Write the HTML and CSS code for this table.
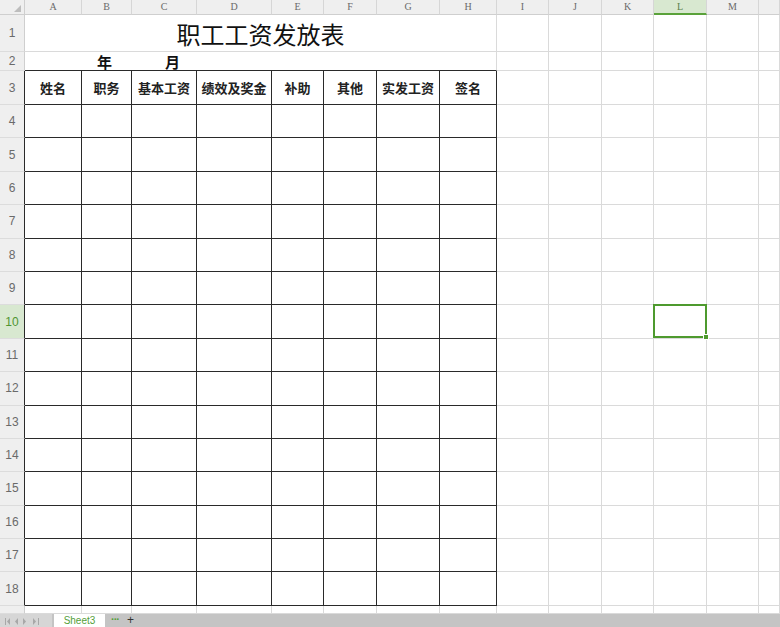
FILE: index.html
```html
<!DOCTYPE html>
<html lang="zh-CN">
<head>
<meta charset="utf-8">
<title>职工工资发放表</title>
<link rel="stylesheet" href="styles.css">
</head>
<body>
<div class="sheet">
  <!-- column header -->
  <div class="hd corner"></div>
  <div class="hd">A</div><div class="hd">B</div><div class="hd">C</div><div class="hd">D</div>
  <div class="hd">E</div><div class="hd">F</div><div class="hd">G</div><div class="hd">H</div>
  <div class="hd">I</div><div class="hd">J</div><div class="hd">K</div><div class="hd hd-sel">L</div>
  <div class="hd">M</div><div class="hd"></div>

  <!-- row 1 -->
  <div class="rh">1</div>
  <div class="c title">职工工资发放表</div>
  <div class="c"></div><div class="c"></div><div class="c"></div><div class="c"></div><div class="c"></div><div class="c"></div>

  <!-- row 2 -->
  <div class="rh">2</div>
  <div class="c date"><span>年</span><span>月</span></div>
  <div class="c"></div><div class="c"></div><div class="c"></div><div class="c"></div><div class="c"></div><div class="c"></div>

  <!-- row 3 -->
  <div class="rh tb">3</div>
  <div class="t th">姓名</div><div class="t th">职务</div><div class="t th">基本工资</div><div class="t th">绩效及奖金</div>
  <div class="t th">补助</div><div class="t th">其他</div><div class="t th">实发工资</div><div class="t th">签名</div>
  <div class="c"></div><div class="c"></div><div class="c"></div><div class="c"></div><div class="c"></div><div class="c"></div>

  <!-- row 4 -->
  <div class="rh tb">4</div>
  <div class="t"></div><div class="t"></div><div class="t"></div><div class="t"></div><div class="t"></div><div class="t"></div><div class="t"></div><div class="t"></div>
  <div class="c"></div><div class="c"></div><div class="c"></div><div class="c"></div><div class="c"></div><div class="c"></div>
  <!-- row 5 -->
  <div class="rh tb">5</div>
  <div class="t"></div><div class="t"></div><div class="t"></div><div class="t"></div><div class="t"></div><div class="t"></div><div class="t"></div><div class="t"></div>
  <div class="c"></div><div class="c"></div><div class="c"></div><div class="c"></div><div class="c"></div><div class="c"></div>
  <!-- row 6 -->
  <div class="rh tb">6</div>
  <div class="t"></div><div class="t"></div><div class="t"></div><div class="t"></div><div class="t"></div><div class="t"></div><div class="t"></div><div class="t"></div>
  <div class="c"></div><div class="c"></div><div class="c"></div><div class="c"></div><div class="c"></div><div class="c"></div>
  <!-- row 7 -->
  <div class="rh tb">7</div>
  <div class="t"></div><div class="t"></div><div class="t"></div><div class="t"></div><div class="t"></div><div class="t"></div><div class="t"></div><div class="t"></div>
  <div class="c"></div><div class="c"></div><div class="c"></div><div class="c"></div><div class="c"></div><div class="c"></div>
  <!-- row 8 -->
  <div class="rh tb">8</div>
  <div class="t"></div><div class="t"></div><div class="t"></div><div class="t"></div><div class="t"></div><div class="t"></div><div class="t"></div><div class="t"></div>
  <div class="c"></div><div class="c"></div><div class="c"></div><div class="c"></div><div class="c"></div><div class="c"></div>
  <!-- row 9 -->
  <div class="rh tb">9</div>
  <div class="t"></div><div class="t"></div><div class="t"></div><div class="t"></div><div class="t"></div><div class="t"></div><div class="t"></div><div class="t"></div>
  <div class="c"></div><div class="c"></div><div class="c"></div><div class="c"></div><div class="c"></div><div class="c"></div>
  <!-- row 10 -->
  <div class="rh tb rh-sel">10</div>
  <div class="t"></div><div class="t"></div><div class="t"></div><div class="t"></div><div class="t"></div><div class="t"></div><div class="t"></div><div class="t"></div>
  <div class="c"></div><div class="c"></div><div class="c"></div><div class="c sel"></div><div class="c"></div><div class="c"></div>
  <!-- row 11 -->
  <div class="rh tb">11</div>
  <div class="t"></div><div class="t"></div><div class="t"></div><div class="t"></div><div class="t"></div><div class="t"></div><div class="t"></div><div class="t"></div>
  <div class="c"></div><div class="c"></div><div class="c"></div><div class="c"></div><div class="c"></div><div class="c"></div>
  <!-- row 12 -->
  <div class="rh tb">12</div>
  <div class="t"></div><div class="t"></div><div class="t"></div><div class="t"></div><div class="t"></div><div class="t"></div><div class="t"></div><div class="t"></div>
  <div class="c"></div><div class="c"></div><div class="c"></div><div class="c"></div><div class="c"></div><div class="c"></div>
  <!-- row 13 -->
  <div class="rh tb">13</div>
  <div class="t"></div><div class="t"></div><div class="t"></div><div class="t"></div><div class="t"></div><div class="t"></div><div class="t"></div><div class="t"></div>
  <div class="c"></div><div class="c"></div><div class="c"></div><div class="c"></div><div class="c"></div><div class="c"></div>
  <!-- row 14 -->
  <div class="rh tb">14</div>
  <div class="t"></div><div class="t"></div><div class="t"></div><div class="t"></div><div class="t"></div><div class="t"></div><div class="t"></div><div class="t"></div>
  <div class="c"></div><div class="c"></div><div class="c"></div><div class="c"></div><div class="c"></div><div class="c"></div>
  <!-- row 15 -->
  <div class="rh tb">15</div>
  <div class="t"></div><div class="t"></div><div class="t"></div><div class="t"></div><div class="t"></div><div class="t"></div><div class="t"></div><div class="t"></div>
  <div class="c"></div><div class="c"></div><div class="c"></div><div class="c"></div><div class="c"></div><div class="c"></div>
  <!-- row 16 -->
  <div class="rh tb">16</div>
  <div class="t"></div><div class="t"></div><div class="t"></div><div class="t"></div><div class="t"></div><div class="t"></div><div class="t"></div><div class="t"></div>
  <div class="c"></div><div class="c"></div><div class="c"></div><div class="c"></div><div class="c"></div><div class="c"></div>
  <!-- row 17 -->
  <div class="rh tb">17</div>
  <div class="t"></div><div class="t"></div><div class="t"></div><div class="t"></div><div class="t"></div><div class="t"></div><div class="t"></div><div class="t"></div>
  <div class="c"></div><div class="c"></div><div class="c"></div><div class="c"></div><div class="c"></div><div class="c"></div>
  <!-- row 18 -->
  <div class="rh tb">18</div>
  <div class="t"></div><div class="t"></div><div class="t"></div><div class="t"></div><div class="t"></div><div class="t"></div><div class="t"></div><div class="t"></div>
  <div class="c"></div><div class="c"></div><div class="c"></div><div class="c"></div><div class="c"></div><div class="c"></div>
  <!-- row 19 (partial) -->
  <div class="rh"></div>
  <div class="c"></div><div class="c"></div><div class="c"></div><div class="c"></div><div class="c"></div><div class="c"></div><div class="c"></div>
  <div class="c"></div><div class="c"></div><div class="c"></div><div class="c"></div><div class="c"></div><div class="c"></div><div class="c"></div>
</div>

<div class="tabs">
  <div class="nav">
    <svg width="52" height="13" viewBox="0 0 52 13">
      <g fill="#a8a8a8">
        <rect x="5" y="4" width="1" height="7"/>
        <polygon points="10,4 10,11 7,7.5"/>
        <polygon points="18,4 18,11 15,7.5"/>
        <polygon points="23,4 23,11 26,7.5"/>
        <polygon points="33,4 33,11 36,7.5"/>
        <rect x="38" y="4" width="1" height="7"/>
      </g>
    </svg>
  </div>
  <div class="tab">Sheet3</div>
  <span class="more">···</span>
  <span class="add">+</span>
</div>
</body>
</html>
```
FILE: styles.css
```css
* {
  box-sizing: border-box;
  margin: 0;
  padding: 0;
}

body {
  width: 780px;
  height: 627px;
  overflow: hidden;
  background: #ffffff;
  font-family: "Noto Sans CJK SC", "Noto Sans", sans-serif;
}

.sheet {
  display: grid;
  grid-template-columns: 25px 57px 50px 65px 75px 52px 53px 63px 57px 52px 53px 52px 53px 52px 21px;
  grid-template-rows: 15px 37px 19px 34px repeat(15, 33.4px) 8px;
  height: 614px;
  overflow: hidden;
}

/* column headers */
.hd {
  background: #efefef;
  border-right: 1px solid #d6d6d6;
  border-bottom: 1px solid #cfcfcf;
  color: #6a6a6a;
  font-family: "Liberation Serif", serif;
  font-size: 10px;
  line-height: 13px;
  text-align: center;
}

.corner {
  position: relative;
  border-right-color: #cfcfcf;
}

.corner::after {
  content: "";
  position: absolute;
  right: 3px;
  bottom: 2px;
  width: 0;
  height: 0;
  border-left: 7px solid transparent;
  border-bottom: 7px solid #bdbdbd;
}

.hd-sel {
  background: #d8e8d0;
  border-bottom: 2px solid #5aa23a;
  color: #5b7f4c;
}

/* row headers */
.rh {
  background: #efefef;
  border-right: 1px solid #cfcfcf;
  border-bottom: 1px solid #dcdcdc;
  color: #6a6a6a;
  font-family: "Liberation Sans", sans-serif;
  font-size: 12px;
  display: flex;
  align-items: center;
  justify-content: center;
  overflow: hidden;
}

.rh.tb {
  border-right-color: #2a2a2a;
}

.rh-sel {
  background: #d8e8d0;
  color: #4f9530;
}

/* cells */
.c {
  border-right: 1px solid #dadada;
  border-bottom: 1px solid #dadada;
}

.t {
  border-right: 1px solid #2a2a2a;
  border-bottom: 1px solid #2a2a2a;
}

.th {
  display: flex;
  align-items: center;
  justify-content: center;
  font-size: 13px;
  font-weight: 700;
  color: #222;
}

.title {
  grid-column: span 8;
  display: flex;
  align-items: center;
  justify-content: center;
  font-size: 24px;
  font-weight: 400;
  color: #111;
  padding-top: 1px;
}

.date {
  grid-column: span 8;
  border-bottom-color: #2a2a2a;
  display: flex;
  align-items: center;
  gap: 53px;
  padding-left: 72px;
  font-size: 15px;
  font-weight: 700;
  color: #111;
  line-height: 1;
}

.sel {
  position: relative;
}

.sel::after {
  content: "";
  position: absolute;
  left: -1px;
  top: -1px;
  right: -1px;
  bottom: 0;
  border: 2px solid #4e9a2e;
}

.sel::before {
  content: "";
  position: absolute;
  right: -3px;
  bottom: -2px;
  width: 4px;
  height: 4px;
  background: #4e9a2e;
  border: 1px solid #fff;
  z-index: 1;
}

/* sheet tabs */
.tabs {
  height: 13px;
  background: #c4c4c4;
  display: flex;
  align-items: flex-start;
  overflow: hidden;
}

.nav {
  width: 52px;
  height: 13px;
  background: #d6d6d6;
}

.nav svg {
  display: block;
}

.tab {
  width: 51px;
  height: 13px;
  margin-left: 2px;
  background: #ffffff;
  color: #55a03a;
  font-family: "Liberation Sans", sans-serif;
  font-size: 10px;
  line-height: 14px;
  text-align: center;
}

.more {
  margin-left: 6px;
  color: #55a03a;
  font-family: "Liberation Sans", sans-serif;
  font-size: 11px;
  font-weight: 700;
  line-height: 11px;
  letter-spacing: -1px;
}

.add {
  margin-left: 8px;
  color: #333;
  font-family: "Liberation Sans", sans-serif;
  font-size: 12px;
  line-height: 13px;
}
```
